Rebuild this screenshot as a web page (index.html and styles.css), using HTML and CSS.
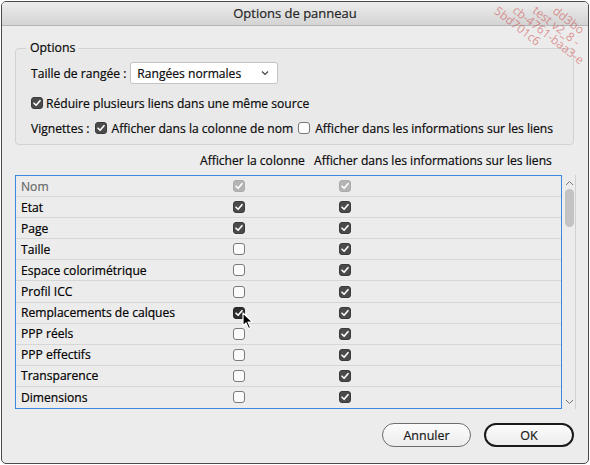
FILE: index.html
```html
<!DOCTYPE html>
<html lang="fr">
<head>
<meta charset="utf-8">
<link rel="stylesheet" href="styles.css">
</head>
<body>
<div class="window">
  <div class="titlebar">Options de panneau</div>
  <div class="content">
    <fieldset class="group">
      <legend>Options</legend>
      <div class="row row-size">
        <span class="label">Taille de rangée :</span>
        <div class="select">
          <span>Rangées normales</span>
          <svg class="chev" width="8" height="6" viewBox="0 0 8 6"><path d="M1 1.5 L4 4.5 L7 1.5" fill="none" stroke="#444" stroke-width="1.2"/></svg>
        </div>
      </div>
      <div class="row row-reduce">
        <svg class="cb" width="12" height="12" viewBox="0 0 12 12"><rect x="0.5" y="0.5" width="11" height="11" rx="2.5" class="on"/><path d="M3 6.2 L5.1 8.3 L9 3.7" class="tick"/></svg>
        <span class="label">Réduire plusieurs liens dans une même source</span>
      </div>
      <div class="row row-thumb">
        <span class="label">Vignettes :</span>
        <svg class="cb" width="12" height="12" viewBox="0 0 12 12"><rect x="0.5" y="0.5" width="11" height="11" rx="2.5" class="on"/><path d="M3 6.2 L5.1 8.3 L9 3.7" class="tick"/></svg>
        <span class="label">Afficher dans la colonne de nom</span>
        <svg class="cb" width="12" height="12" viewBox="0 0 12 12"><rect x="0.5" y="0.5" width="11" height="11" rx="2.5" class="off"/></svg>
        <span class="label">Afficher dans les informations sur les liens</span>
      </div>
    </fieldset>

    <div class="colheads">
      <span class="h1">Afficher la colonne</span>
      <span class="h2">Afficher dans les informations sur les liens</span>
    </div>

    <div class="listbox">
      <div class="list">
        <div class="lrow dim"><span class="name">Nom</span>
          <svg class="cb" width="12" height="12" viewBox="0 0 12 12"><rect x="0.5" y="0.5" width="11" height="11" rx="2.5" class="dis"/><path d="M3 6.2 L5.1 8.3 L9 3.7" class="tick"/></svg>
          <svg class="cb" width="12" height="12" viewBox="0 0 12 12"><rect x="0.5" y="0.5" width="11" height="11" rx="2.5" class="dis"/><path d="M3 6.2 L5.1 8.3 L9 3.7" class="tick"/></svg>
        </div>
        <div class="lrow"><span class="name">Etat</span>
          <svg class="cb" width="12" height="12" viewBox="0 0 12 12"><rect x="0.5" y="0.5" width="11" height="11" rx="2.5" class="on"/><path d="M3 6.2 L5.1 8.3 L9 3.7" class="tick"/></svg>
          <svg class="cb" width="12" height="12" viewBox="0 0 12 12"><rect x="0.5" y="0.5" width="11" height="11" rx="2.5" class="on"/><path d="M3 6.2 L5.1 8.3 L9 3.7" class="tick"/></svg>
        </div>
        <div class="lrow"><span class="name">Page</span>
          <svg class="cb" width="12" height="12" viewBox="0 0 12 12"><rect x="0.5" y="0.5" width="11" height="11" rx="2.5" class="on"/><path d="M3 6.2 L5.1 8.3 L9 3.7" class="tick"/></svg>
          <svg class="cb" width="12" height="12" viewBox="0 0 12 12"><rect x="0.5" y="0.5" width="11" height="11" rx="2.5" class="on"/><path d="M3 6.2 L5.1 8.3 L9 3.7" class="tick"/></svg>
        </div>
        <div class="lrow"><span class="name">Taille</span>
          <svg class="cb" width="12" height="12" viewBox="0 0 12 12"><rect x="0.5" y="0.5" width="11" height="11" rx="2.5" class="off"/></svg>
          <svg class="cb" width="12" height="12" viewBox="0 0 12 12"><rect x="0.5" y="0.5" width="11" height="11" rx="2.5" class="on"/><path d="M3 6.2 L5.1 8.3 L9 3.7" class="tick"/></svg>
        </div>
        <div class="lrow"><span class="name">Espace colorimétrique</span>
          <svg class="cb" width="12" height="12" viewBox="0 0 12 12"><rect x="0.5" y="0.5" width="11" height="11" rx="2.5" class="off"/></svg>
          <svg class="cb" width="12" height="12" viewBox="0 0 12 12"><rect x="0.5" y="0.5" width="11" height="11" rx="2.5" class="on"/><path d="M3 6.2 L5.1 8.3 L9 3.7" class="tick"/></svg>
        </div>
        <div class="lrow"><span class="name">Profil ICC</span>
          <svg class="cb" width="12" height="12" viewBox="0 0 12 12"><rect x="0.5" y="0.5" width="11" height="11" rx="2.5" class="off"/></svg>
          <svg class="cb" width="12" height="12" viewBox="0 0 12 12"><rect x="0.5" y="0.5" width="11" height="11" rx="2.5" class="on"/><path d="M3 6.2 L5.1 8.3 L9 3.7" class="tick"/></svg>
        </div>
        <div class="lrow"><span class="name">Remplacements de calques</span>
          <svg class="cb" width="12" height="12" viewBox="0 0 12 12"><rect x="0.5" y="0.5" width="11" height="11" rx="2.5" class="on dark"/><path d="M3 6.2 L5.1 8.3 L9 3.7" class="tick"/></svg>
          <svg class="cb" width="12" height="12" viewBox="0 0 12 12"><rect x="0.5" y="0.5" width="11" height="11" rx="2.5" class="on"/><path d="M3 6.2 L5.1 8.3 L9 3.7" class="tick"/></svg>
        </div>
        <div class="lrow"><span class="name">PPP réels</span>
          <svg class="cb" width="12" height="12" viewBox="0 0 12 12"><rect x="0.5" y="0.5" width="11" height="11" rx="2.5" class="off"/></svg>
          <svg class="cb" width="12" height="12" viewBox="0 0 12 12"><rect x="0.5" y="0.5" width="11" height="11" rx="2.5" class="on"/><path d="M3 6.2 L5.1 8.3 L9 3.7" class="tick"/></svg>
        </div>
        <div class="lrow"><span class="name">PPP effectifs</span>
          <svg class="cb" width="12" height="12" viewBox="0 0 12 12"><rect x="0.5" y="0.5" width="11" height="11" rx="2.5" class="off"/></svg>
          <svg class="cb" width="12" height="12" viewBox="0 0 12 12"><rect x="0.5" y="0.5" width="11" height="11" rx="2.5" class="on"/><path d="M3 6.2 L5.1 8.3 L9 3.7" class="tick"/></svg>
        </div>
        <div class="lrow"><span class="name">Transparence</span>
          <svg class="cb" width="12" height="12" viewBox="0 0 12 12"><rect x="0.5" y="0.5" width="11" height="11" rx="2.5" class="off"/></svg>
          <svg class="cb" width="12" height="12" viewBox="0 0 12 12"><rect x="0.5" y="0.5" width="11" height="11" rx="2.5" class="on"/><path d="M3 6.2 L5.1 8.3 L9 3.7" class="tick"/></svg>
        </div>
        <div class="lrow"><span class="name">Dimensions</span>
          <svg class="cb" width="12" height="12" viewBox="0 0 12 12"><rect x="0.5" y="0.5" width="11" height="11" rx="2.5" class="off"/></svg>
          <svg class="cb" width="12" height="12" viewBox="0 0 12 12"><rect x="0.5" y="0.5" width="11" height="11" rx="2.5" class="on"/><path d="M3 6.2 L5.1 8.3 L9 3.7" class="tick"/></svg>
        </div>
      </div>
      <div class="scrollbar">
        <svg width="9" height="6" viewBox="0 0 9 6"><path d="M1 5 L4.5 1.5 L8 5" fill="none" stroke="#777" stroke-width="1"/></svg>
        <div class="thumb"></div>
        <div class="spacer"></div>
        <svg width="9" height="6" viewBox="0 0 9 6"><path d="M1 1 L4.5 4.5 L8 1" fill="none" stroke="#777" stroke-width="1"/></svg>
      </div>
    </div>

    <div class="buttons">
      <button class="btn">Annuler</button>
      <button class="btn default">OK</button>
    </div>
  </div>

  <svg class="cursor" width="12" height="18" viewBox="0 0 12 18"><path d="M1 1 L1 14 L4 11 L6.5 16.5 L8.5 15.5 L6 10 L10.5 10 Z" fill="#000" stroke="#fff" stroke-width="1.2" stroke-linejoin="round"/></svg>

  <div class="watermark">
    <div class="w1">dd3bo</div>
    <div class="w2">test v2_8 -</div>
    <div class="w3">cb-4761-baa3-e</div>
    <div class="w4">5bd701c6</div>
  </div>
</div>
</body>
</html>
```
FILE: styles.css
```css
* { box-sizing: border-box; }
html, body { margin: 0; padding: 0; background: #fff; }
body {
  font-family: "Open Sans", "DejaVu Sans", sans-serif;
  font-size: 12.1px;
  color: #0a0a0a;
  -webkit-text-stroke: 0.2px currentColor;
}
.window {
  position: relative;
  margin: 1px;
  width: 588px;
  height: 463px;
  border: 1px solid #4a4a4a;
  border-radius: 5px;
  background: #ececec;
  overflow: hidden;
}
.titlebar {
  height: 24px;
  background: linear-gradient(#ececec, #d4d4d4);
  border-bottom: 1px solid #b4b4b4;
  text-align: center;
  line-height: 23px;
  font-size: 13px;
  color: #262626;
}
.content { padding: 15px 13px 0 13px; }
.group {
  margin: 0;
  border: 1px solid #d2d2d2;
  border-radius: 4px;
  padding: 0 0 6px 10px;
  width: 559px;
  background: #e9e9e9;
}
.group legend { padding: 0 4px; line-height: 14px; font-size: 12.3px; }
.row { display: flex; align-items: center; gap: 6px; margin-left: 5px; }
.row-size { height: 22px; margin-top: 7px; gap: 3px; }
.row-reduce { height: 20px; margin-top: 9px; gap: 3px; }
.row-thumb { height: 20px; margin-top: 5px; }
.row-thumb .cb { margin: 0 -1px; }
.label { white-space: nowrap; }
.select {
  width: 148px; height: 22px;
  background: #fff;
  border: 1px solid #c4c4c4;
  border-radius: 3px;
  display: flex; align-items: center; justify-content: space-between;
  padding: 0 8px 0 6px;
  margin-left: 1px;
}
.cb { flex: none; display: block; }
.cb .on { fill: #4b4b4b; stroke: #3a3a3a; stroke-width: 1; }
.cb .on.dark { fill: #2e2e2e; stroke: #222; }
.cb .off { fill: #fbfbfb; stroke: #7a7a7a; stroke-width: 1; }
.cb .dis { fill: #b4b4b4; stroke: #ababab; stroke-width: 1; }
.cb .tick { fill: none; stroke: #fff; stroke-width: 1.6; stroke-linecap: round; stroke-linejoin: round; }
.colheads { display: flex; height: 16px; margin-top: 8px; line-height: 16px; white-space: nowrap; }
.colheads .h1 { margin-left: 185px; width: 114px; }
.listbox { display: flex; margin-top: 6px; width: 561px; height: 234px; }
.list {
  width: 547px;
  border: 1px solid #3f86e0;
  background: #ececec;
}
.lrow {
  display: grid;
  grid-template-columns: 212px 106px 1fr;
  align-items: center;
  height: 21.1px;
  border-bottom: 1px solid #d6d6d6;
  padding-left: 5px;
}
.lrow:last-child { border-bottom: none; }
.lrow .name { color: #000; }
.lrow.dim .name { color: #6a6a6a; }
.scrollbar {
  width: 14px;
  display: flex; flex-direction: column; align-items: center;
  padding: 5px 0 4px 2px;
  border-right: 1px solid #d0d0d0;
}
.thumb { width: 9px; height: 38px; margin-top: 3px; border-radius: 5px; background: #c3c3c3; }
.spacer { flex: 1; }
.buttons { display: flex; justify-content: flex-end; gap: 13px; margin-top: 14px; padding-right: 1px; }
.btn {
  font-family: inherit; font-size: 12.5px; color: #1a1a1a;
  -webkit-text-stroke: 0.2px #1a1a1a;
  width: 89px; height: 24px;
  border: 1px solid #6e6e6e; border-radius: 12px;
  background: linear-gradient(#fcfcfc, #ececec);
}
.btn.default { width: 90px; border: 2px solid #1a1a1a; }
.cursor { position: absolute; left: 240px; top: 310px; }
.watermark {
  position: absolute; left: 518px; top: -27px;
  transform: rotate(38deg); transform-origin: 0 0;
  color: rgba(205, 70, 70, 0.55);
  -webkit-text-stroke: 0;
  font-size: 12px; line-height: 12px;
  white-space: nowrap;
  pointer-events: none;
}
.watermark .w1 { padding-left: 48px; }
.watermark .w2 { padding-left: 32px; }
.watermark .w3 { padding-left: 16px; }
.watermark .w4 { padding-left: 2px; }
```
